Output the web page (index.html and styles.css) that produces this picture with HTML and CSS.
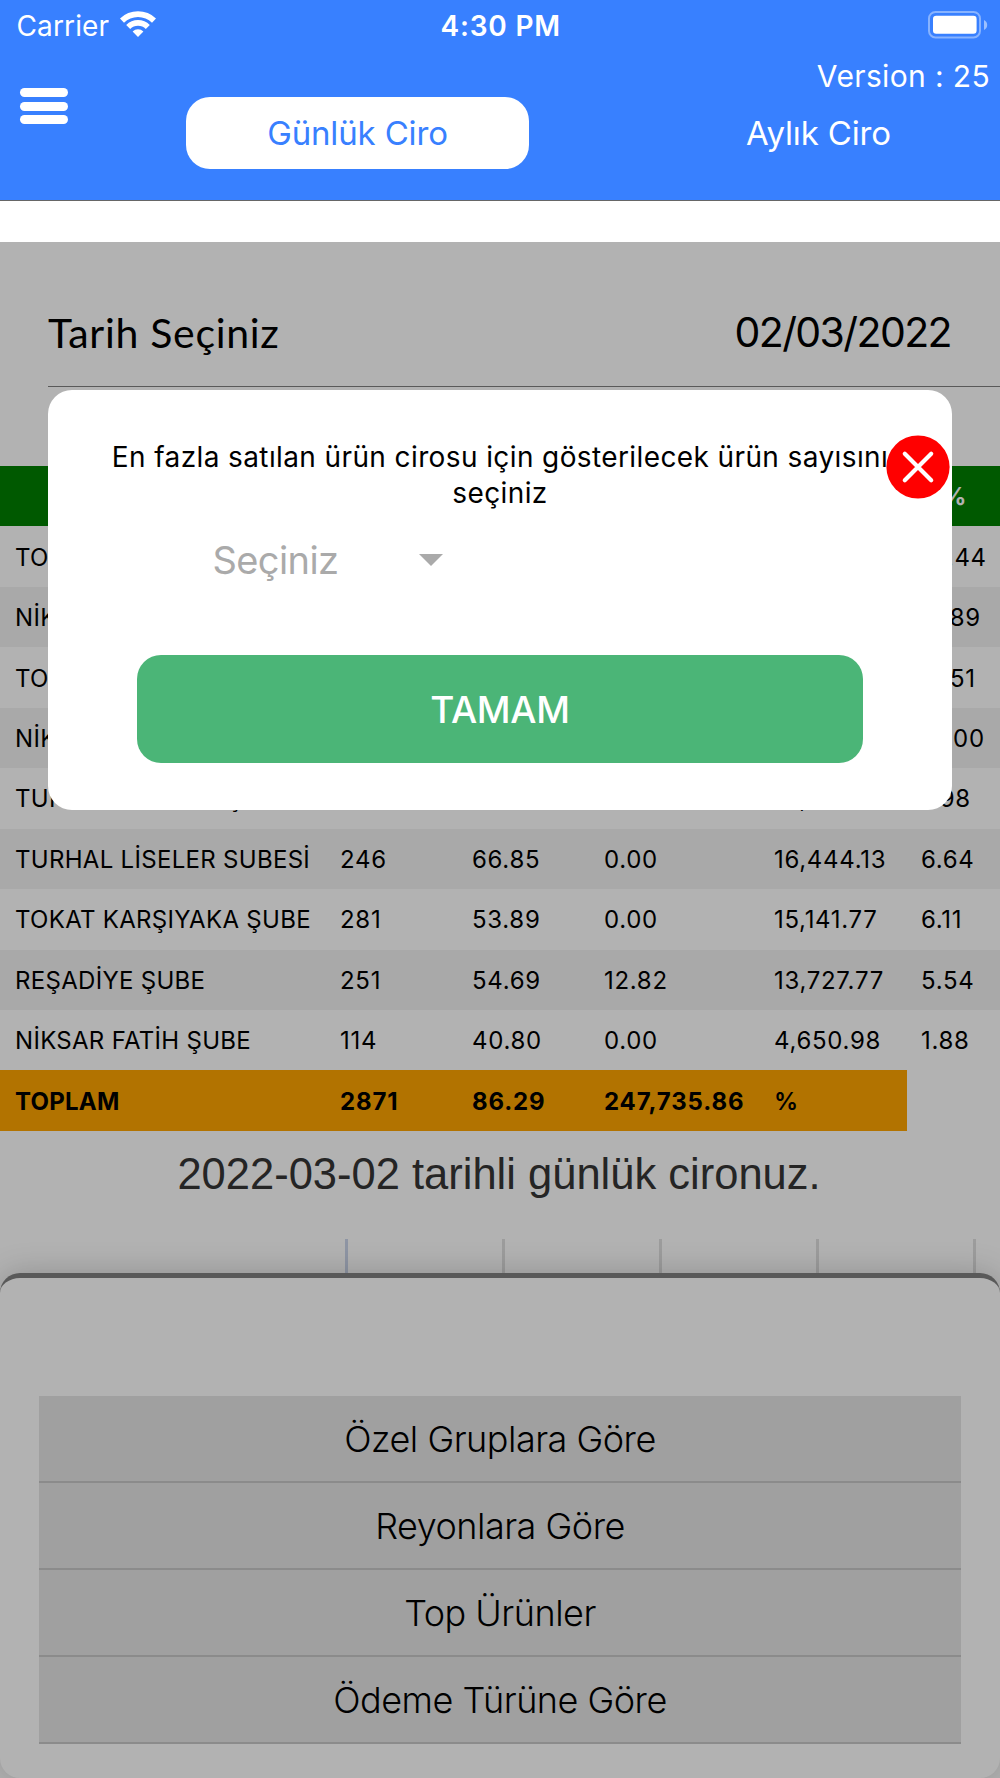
FILE: index.html
```html
<!DOCTYPE html>
<html lang="tr">
<head>
    <meta charset="UTF-8">
    <meta name="viewport" content="width=device-width, initial-scale=1.0">
    <title>Günlük Ciro</title>
    <link rel="stylesheet" href="styles.css">
</head>
<body>

<header class="header">
    <div class="status-bar">
        <div class="carrier">
            <span>Carrier</span>
            <svg class="wifi" width="38" height="28" viewBox="0 0 38 28">
                <path d="M1 8.6 A25.5 25.5 0 0 1 37 8.6 L33 12.8 A19.8 19.8 0 0 0 5 12.8 Z" fill="#fff"/>
                <path d="M7.2 14.9 A16.7 16.7 0 0 1 30.8 14.9 L26.8 19 A11 11 0 0 0 11.2 19 Z" fill="#fff"/>
                <path d="M13.6 21.4 A7.8 7.8 0 0 1 24.4 21.4 L19 27 Z" fill="#fff"/>
            </svg>
        </div>
        <div class="clock">4:30 PM</div>
        <svg class="battery" width="60" height="28" viewBox="0 0 60 28">
            <rect x="1" y="1" width="51" height="25.4" rx="6.5" fill="none" stroke="#fff" stroke-opacity="0.4" stroke-width="2"/>
            <rect x="5" y="4.8" width="43.6" height="18" rx="3.2" fill="#fff"/>
            <path d="M56 9 Q59.2 10.6 59.2 14 Q59.2 17.4 56 19 Z" fill="#fff" fill-opacity="0.5"/>
        </svg>
    </div>
    <div class="version">Version : 25</div>
    <div class="nav">
        <div class="menu-btn">
            <span></span>
            <span></span>
            <span></span>
        </div>
        <div class="tab active">Günlük Ciro</div>
        <div class="tab">Aylık Ciro</div>
    </div>
</header>

<main class="content">
    <div class="date-row">
        <span class="date-label">Tarih Seçiniz</span>
        <span class="date-value">02/03/2022</span>
    </div>

    <table class="report">
        <colgroup>
            <col class="col-name">
            <col class="col-count">
            <col class="col-avg">
            <col class="col-return">
            <col class="col-total">
            <col class="col-percent">
        </colgroup>
        <thead>
            <tr>
                <th></th>
                <th></th>
                <th></th>
                <th></th>
                <th></th>
                <th>%</th>
            </tr>
        </thead>
        <tbody>
            <tr><td>TOKAT MERKEZ</td><td>560</td><td>94.85</td><td>0.00</td><td>53,114.57</td><td>21.44</td></tr>
            <tr><td>NİKSAR MERKEZ</td><td>470</td><td>94.30</td><td>0.00</td><td>44,319.95</td><td>17.89</td></tr>
            <tr><td>TOKAT ÇARŞI</td><td>420</td><td>103.28</td><td>0.00</td><td>43,378.55</td><td>17.51</td></tr>
            <tr><td>NİKSAR ÇARŞI</td><td>300</td><td>123.87</td><td>0.00</td><td>37,160.38</td><td>15.00</td></tr>
            <tr><td>TURHAL MERKEZ ŞUBE</td><td>229</td><td>86.33</td><td>0.00</td><td>19,769.32</td><td>7.98</td></tr>
            <tr><td>TURHAL LİSELER SUBESİ</td><td>246</td><td>66.85</td><td>0.00</td><td>16,444.13</td><td>6.64</td></tr>
            <tr><td>TOKAT KARŞIYAKA ŞUBE</td><td>281</td><td>53.89</td><td>0.00</td><td>15,141.77</td><td>6.11</td></tr>
            <tr><td>REŞADİYE ŞUBE</td><td>251</td><td>54.69</td><td>12.82</td><td>13,727.77</td><td>5.54</td></tr>
            <tr><td>NİKSAR FATİH ŞUBE</td><td>114</td><td>40.80</td><td>0.00</td><td>4,650.98</td><td>1.88</td></tr>
            <tr class="total"><td>TOPLAM</td><td>2871</td><td>86.29</td><td>247,735.86</td><td>%</td></tr>
        </tbody>
    </table>

    <h2 class="chart-title">2022-03-02 tarihli günlük cironuz.</h2>
    <!-- top of the chart grid, the rest is behind the sheet -->
    <div class="chart">
        <span class="axis"></span>
        <span></span>
        <span></span>
        <span></span>
        <span></span>
    </div>
</main>

<section class="sheet">
    <button class="sheet-btn">Özel Gruplara Göre</button>
    <button class="sheet-btn">Reyonlara Göre</button>
    <button class="sheet-btn">Top Ürünler</button>
    <button class="sheet-btn">Ödeme Türüne Göre</button>
</section>

<div class="overlay">
    <div class="modal">
        <p class="modal-text">En fazla satılan ürün cirosu için gösterilecek ürün sayısını seçiniz</p>
        <div class="select">
            <span>Seçiniz</span>
            <i class="arrow"></i>
        </div>
        <button class="ok-btn">TAMAM</button>
        <svg class="close" width="64" height="64" viewBox="0 0 64 64">
            <circle cx="32" cy="32" r="31.6" fill="#f00"/>
            <path d="M18.8 18.8 L45.2 45.2 M45.2 18.8 L18.8 45.2" stroke="#fff" stroke-width="4.2" stroke-linecap="round"/>
        </svg>
    </div>
</div>

</body>
</html>
```
FILE: styles.css
```css
* {
    box-sizing: border-box;
}
body {
    position: relative;
    display: flex;
    flex-direction: column;
    height: 1778px;
    margin: 0;
    overflow: hidden;
    background-color: white;
    font-family: Inter, "Liberation Sans", sans-serif;
    color: black;
}
button {
    border: none;
    font-family: inherit;
    cursor: pointer;
}

/* header */
.header {
    height: 201px;
    background-color: #3880ff;
    border-bottom: 1px solid #666;
    color: white;
}
.status-bar {
    display: grid;
    grid-template-columns: 1fr auto 1fr;
    height: 51px;
    padding: 0 12px 0 16.5px;
    line-height: 52px;
    font-size: 28px;
}
.carrier {
    display: flex;
    gap: 10px;
    letter-spacing: 0.13px;
}
.wifi {
    margin-top: 9.5px;
}
.clock {
    font-weight: 600;
    letter-spacing: 0.8px;
    margin-right: 3px;
}
.battery {
    justify-self: end;
    margin-top: 10.5px;
}
.version {
    height: 46px;
    padding: 5px 10px 0 0;
    line-height: 41px;
    font-size: 30px;
    letter-spacing: 0.36px;
    text-align: right;
}
.nav {
    display: flex;
    height: 72px;
    padding-left: 19.5px;
}
.menu-btn {
    display: flex;
    flex: none;
    flex-direction: column;
    gap: 4.5px;
    width: 48.5px;
    margin: -9px 118px 0 0;
}
.menu-btn span {
    height: 9px;
    border-radius: 5px;
    background-color: white;
}
.tab {
    flex: none;
    width: 343px;
    margin-right: 118px;
    border-radius: 24px;
    line-height: 72px;
    font-size: 33px;
    letter-spacing: -0.15px;
    text-align: center;
}
.tab.active {
    background-color: white;
    color: #3880ff;
}

/* page */
.content {
    flex: 1;
    padding-top: 41px;
    overflow: hidden;
}
.date-row {
    display: flex;
    justify-content: space-between;
    height: 145px;
    margin-left: 48px;
    padding-right: 49px;
    border-bottom: 1px solid #808080;
    font-size: 41px;
    line-height: 181px;
}
.date-label {
    font-family: Lato, "Open Sans", sans-serif;
    letter-spacing: 0.7px;
}
.date-value {
    letter-spacing: -1.6px;
}
.report {
    width: 1002px;
    margin-top: 79px;
    border-collapse: collapse;
    table-layout: fixed;
    font-size: 24px;
    letter-spacing: 0.7px;
}
.col-name {
    width: 325px;
}
.col-count {
    width: 132px;
}
.col-avg {
    width: 132px;
}
.col-return {
    width: 170px;
}
.col-total {
    width: 148px;
}
.col-percent {
    width: 95px;
}
.report th, .report td {
    height: 60.44px;
    padding: 1px 0 0 15px;
    text-align: left;
    white-space: nowrap;
}
.report td:first-child {
    letter-spacing: 0.3px;
}
.report td:nth-child(6) {
    padding-left: 14px;
}
.report th {
    padding: 0;
    background-color: #008000;
    color: white;
    text-align: center;
}
.report tbody tr:nth-child(even) {
    background-color: #f2f2f2;
}
.report .total td {
    background-color: #ffa500;
    font-weight: bold;
    letter-spacing: 0.87px;
}
.report .total td:first-child {
    letter-spacing: 0.24px;
}
.report .total td:last-child {
    font-weight: 600;
}
.chart-title {
    margin: 18px 2px 39px 0;
    font: 43.5px/51px "Liberation Sans", Arial, sans-serif;
    color: #353535;
    text-align: center;
}
.chart {
    display: flex;
    gap: 154px;
    height: 40px;
    margin-left: 345px;
}
.chart span {
    flex: none;
    width: 3px;
    background-color: #e0e0e0;
}
.chart .axis {
    background-color: #ccd6eb;
}

/* bottom sheet */
.sheet {
    position: relative;
    height: 505px;
    padding: 118px 39px 0;
    border-top: 5px solid gray;
    border-radius: 20px;
    background-color: white;
    box-shadow: 0 0 32px rgba(0, 0, 0, 0.2);
}
.sheet-btn {
    display: block;
    width: 100%;
    height: 87px;
    border-bottom: 2px solid #c8c8c8;
    background-color: #e6e6e6;
    font-size: 36px;
    font-weight: 300;
    letter-spacing: -0.5px;
    color: black;
}

/* modal */
.overlay {
    position: absolute;
    inset: 242px 0 0 0;
    background-color: rgba(0, 0, 0, 0.3);
}
.modal {
    position: relative;
    height: 420px;
    margin: 148px 48px 0;
    padding: 49px 60px 0;
    border-radius: 24px;
    background-color: white;
}
.modal-text {
    margin: 0;
    font-size: 28px;
    line-height: 36px;
    letter-spacing: 0.39px;
    text-align: center;
}
.select {
    display: flex;
    align-items: center;
    justify-content: space-between;
    width: 230px;
    margin: 10px 0 56px 104.5px;
    font-size: 38px;
    line-height: 78px;
    letter-spacing: -0.6px;
    color: #aaa;
}
.arrow {
    border: 12px solid transparent;
    border-top-color: #aaa;
    border-bottom: none;
}
.ok-btn {
    display: block;
    width: 726px;
    height: 108px;
    margin: 0 auto;
    border-radius: 24px;
    background-color: #4bb577;
    font-size: 37px;
    font-weight: 500;
    letter-spacing: -0.3px;
    color: white;
}
.close {
    position: absolute;
    top: 45px;
    right: 2.5px;
}
```
